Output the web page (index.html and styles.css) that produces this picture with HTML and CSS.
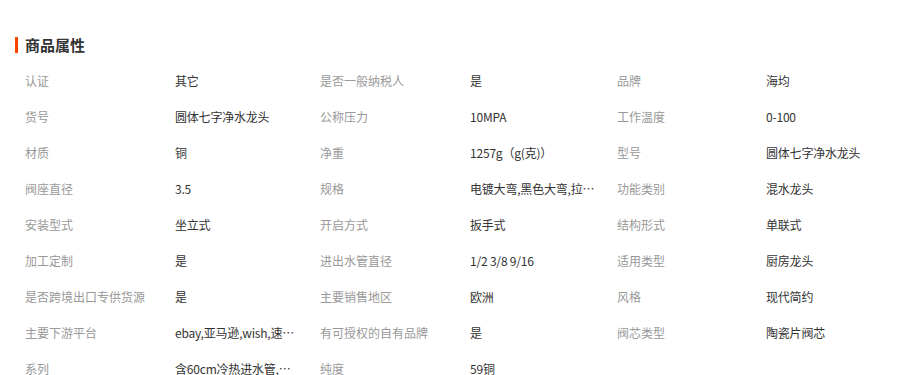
FILE: index.html
```html
<!DOCTYPE html>
<html lang="zh-CN">
<head>
<meta charset="utf-8">
<link rel="stylesheet" href="styles.css">
</head>
<body>
<div class="attrs">
  <h2 class="title">商品属性</h2>
  <div class="grid">
    <div class="label">认证</div><div class="value">其它</div>
    <div class="label">是否一般纳税人</div><div class="value">是</div>
    <div class="label">品牌</div><div class="value">海均</div>

    <div class="label">货号</div><div class="value">圆体七字净水龙头</div>
    <div class="label">公称压力</div><div class="value">10MPA</div>
    <div class="label">工作温度</div><div class="value">0-100</div>

    <div class="label">材质</div><div class="value">铜</div>
    <div class="label">净重</div><div class="value">1257g（g(克)）</div>
    <div class="label">型号</div><div class="value">圆体七字净水龙头</div>

    <div class="label">阀座直径</div><div class="value">3.5</div>
    <div class="label">规格</div><div class="value">电镀大弯,黑色大弯,拉丝大弯</div>
    <div class="label">功能类别</div><div class="value">混水龙头</div>

    <div class="label">安装型式</div><div class="value">坐立式</div>
    <div class="label">开启方式</div><div class="value">扳手式</div>
    <div class="label">结构形式</div><div class="value">单联式</div>

    <div class="label">加工定制</div><div class="value">是</div>
    <div class="label">进出水管直径</div><div class="value">1/2 3/8 9/16</div>
    <div class="label">适用类型</div><div class="value">厨房龙头</div>

    <div class="label">是否跨境出口专供货源</div><div class="value">是</div>
    <div class="label">主要销售地区</div><div class="value">欧洲</div>
    <div class="label">风格</div><div class="value">现代简约</div>

    <div class="label">主要下游平台</div><div class="value">ebay,亚马逊,wish,速卖通,独立站</div>
    <div class="label">有可授权的自有品牌</div><div class="value">是</div>
    <div class="label">阀芯类型</div><div class="value">陶瓷片阀芯</div>

    <div class="label">系列</div><div class="value">含60cm冷热进水管,不含</div>
    <div class="label">纯度</div><div class="value">59铜</div>
    <div class="label"></div><div class="value"></div>
  </div>
</div>
</body>
</html>
```

FILE: styles.css
```css
html, body {
  margin: 0;
  padding: 0;
  background: #fff;
}
body {
  font-family: "Microsoft YaHei", "Noto Sans CJK SC", "Noto Sans", sans-serif;
  font-size: 12px;
  color: #333;
}
.attrs {
  padding: 37px 0 0 15px;
}
.title {
  margin: 0;
  padding-left: 7px;
  border-left: 3px solid #ff4400;
  font-size: 15px;
  font-weight: bold;
  line-height: 16px;
  height: 16px;
  color: #333;
}
.grid {
  margin-top: 10px;
  padding-left: 10px;
  display: grid;
  grid-template-columns: 150px 145px 150px 147px 149px 130px;
  grid-auto-rows: 36px;
}
.label, .value {
  line-height: 36px;
  white-space: nowrap;
  overflow: hidden;
  text-overflow: ellipsis;
}
.label {
  color: #999;
}
.value {
  color: #333;
  max-width: 126px;
  letter-spacing: -0.2px;
}
```
